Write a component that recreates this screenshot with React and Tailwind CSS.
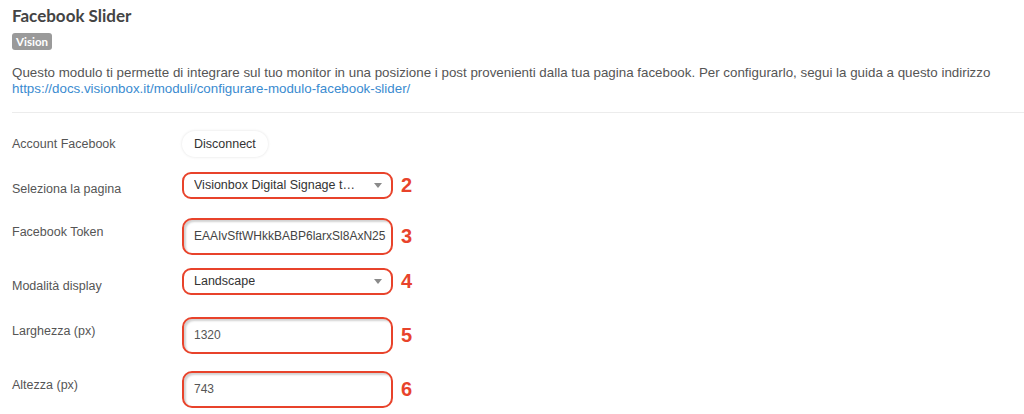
import React from 'react';

const RED = 'border-[#e8432b]';

const Caret = () => (
  <svg width="8" height="5" viewBox="0 0 8 5" className="shrink-0">
    <path d="M0 0 L8 0 L4 5 Z" fill="#8a8a8a" />
  </svg>
);

const Marker = ({ n }) => (
  <span className="ml-[8px] text-[20px] font-bold leading-none text-[#e8432b]" style={{ fontFamily: '"Liberation Sans", Arial, sans-serif' }}>
    {n}
  </span>
);

const SelectBox = ({ value, n }) => (
  <div className="flex items-center">
    <div className={`flex h-[27px] w-[211px] items-center justify-between rounded-[9px] border-2 ${RED} bg-white pl-[10px] pr-[9px] text-[12.5px] text-[#333]`}>
      <span className="truncate">{value}</span>
      <Caret />
    </div>
    <Marker n={n} />
  </div>
);

const InputBox = ({ value, n }) => (
  <div className="flex items-center">
    <div className={`flex h-[37px] w-[211px] items-center overflow-hidden rounded-[10px] border-2 ${RED} bg-white pl-[10px] text-[#555] shadow-[inset_2px_2px_2px_rgba(0,0,0,0.18)]`}>
      {value}
    </div>
    <Marker n={n} />
  </div>
);

export default function App() {
  return (
    <div className="min-h-[414px] w-[1024px] overflow-hidden bg-white pl-[12px] text-[#444]" style={{ fontFamily: '"Liberation Sans", Arial, sans-serif' }}>
      <h1 className="pt-[5px] text-[17px] font-bold leading-[22px] text-[#444]" style={{ fontFamily: 'Lato, sans-serif' }}>
        Facebook Slider
      </h1>
      <span className="mt-[6px] inline-flex h-[17px] items-center rounded-[3px] bg-[#9a9a9a] px-[4px] text-[11.5px] font-bold text-white" style={{ fontFamily: 'Lato, sans-serif' }}>
        Vision
      </span>
      <p className="mt-[12px] text-[13.35px] leading-[16px] text-[#555]">
        Questo modulo ti permette di integrare sul tuo monitor in una posizione i post provenienti dalla tua pagina facebook. Per configurarlo, segui la guida a questo indirizzo
        <br />
        <a className="text-[#3a8bd0]">https://docs.visionbox.it/moduli/configurare-modulo-facebook-slider/</a>
      </p>
      <div className="mt-[15px] h-px bg-[#ececec]" />

      <div className="text-[12.5px] text-[#555]">
        <div className="mt-[18px] flex h-[26px] items-center">
          <div className="w-[170px]">Account Facebook</div>
          <button className="h-[26px] rounded-full bg-white px-[12px] text-[12.5px] text-[#333] shadow-[0_0_3px_rgba(0,0,0,0.12)]">
            Disconnect
          </button>
        </div>

        <div className="mt-[15px] flex items-start">
          <div className="w-[170px] pt-[8px]">Seleziona la pagina</div>
          <SelectBox value="Visionbox Digital Signage t…" n="2" />
        </div>

        <div className="mt-[19px] flex items-start">
          <div className="w-[170px] pt-[5px]">Facebook Token</div>
          <InputBox value={<span className="whitespace-nowrap text-[12px] text-[#444]">EAAIvSftWHkkBABP6larxSl8AxN25</span>} n="3" />
        </div>

        <div className="mt-[13px] flex items-start">
          <div className="w-[170px] pt-[9px]">Modalità display</div>
          <SelectBox value="Landscape" n="4" />
        </div>

        <div className="mt-[21px] flex items-start">
          <div className="w-[170px] pt-[5px]">Larghezza (px)</div>
          <InputBox value={<span className="text-[12px]">1320</span>} n="5" />
        </div>

        <div className="mt-[17px] flex items-start">
          <div className="w-[170px] pt-[5px]">Altezza (px)</div>
          <InputBox value={<span className="text-[12px]">743</span>} n="6" />
        </div>
      </div>
    </div>
  );
}
